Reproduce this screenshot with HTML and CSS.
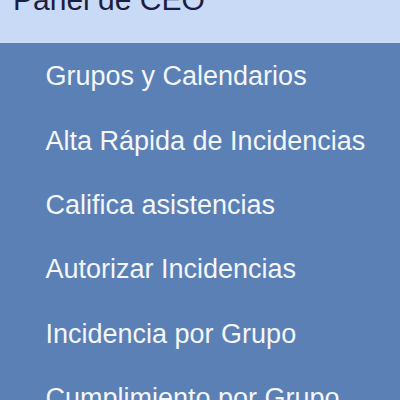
FILE: index.html
```html
<!DOCTYPE html>
<html lang="es">
<head>
<meta charset="utf-8">
<title>Panel de CEO</title>
<link rel="stylesheet" href="styles.css">
</head>
<body>
<header class="panel-header">
  <h1 class="panel-title">Panel de CEO</h1>
</header>
<nav class="menu">
  <ul class="menu-list">
    <li class="menu-item">Grupos y Calendarios</li>
    <li class="menu-item">Alta Rápida de Incidencias</li>
    <li class="menu-item">Califica asistencias</li>
    <li class="menu-item">Autorizar Incidencias</li>
    <li class="menu-item">Incidencia por Grupo</li>
    <li class="menu-item">Cumplimiento por Grupo</li>
  </ul>
</nav>
</body>
</html>
```
FILE: styles.css
```css
html, body {
  margin: 0;
  padding: 0;
}
body {
  background: #5a80b6;
  font-family: "Liberation Sans", Arial, sans-serif;
  overflow: hidden;
  height: 400px;
}
.panel-header {
  background: #c8daf5;
  height: 43px;
  overflow: hidden;
}
.panel-title {
  margin: -17px 0 0 13px;
  font-size: 30px;
  font-weight: normal;
  line-height: normal;
  color: #1d1d42;
}
.menu {
  background: #5a80b6;
  padding-top: 1.5px;
}
.menu-list {
  list-style: none;
  margin: 0;
  padding: 0;
}
.menu-item {
  padding: 16.7px 0 16.7px 45.5px;
  font-size: 27px;
  line-height: 31px;
  color: #f4f6fa;
  white-space: nowrap;
}
```
